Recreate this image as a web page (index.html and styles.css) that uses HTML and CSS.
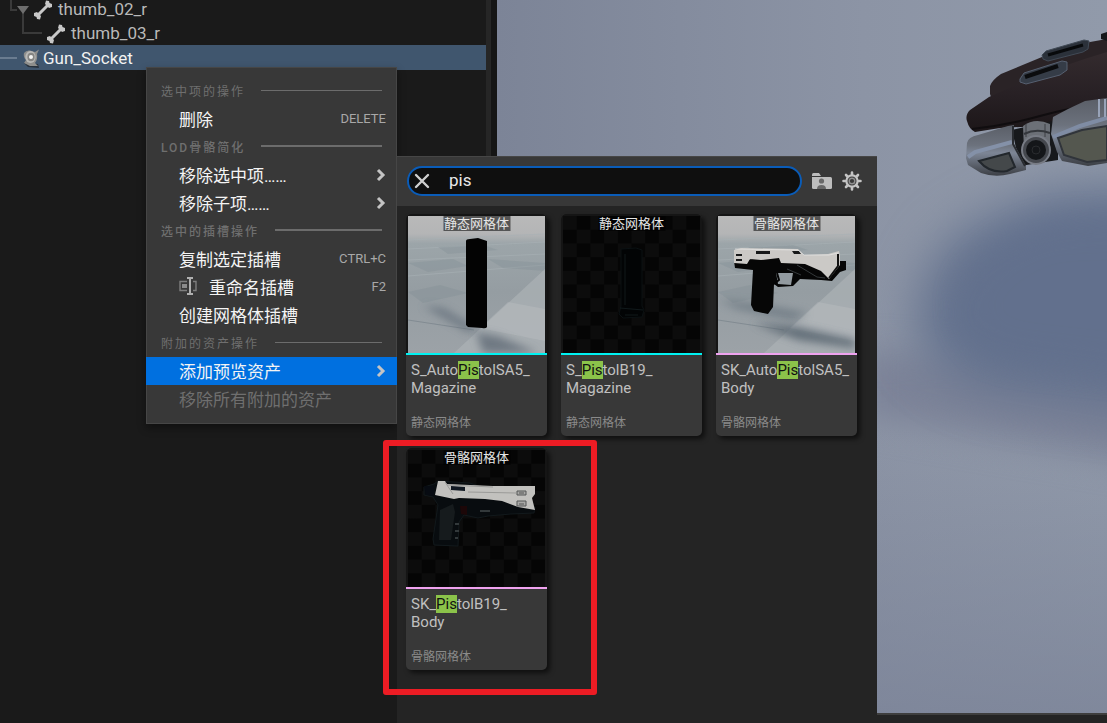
FILE: index.html
```html
<!DOCTYPE html>
<html lang="zh-CN">
<head>
<meta charset="utf-8">
<title>Skeleton Editor</title>
<link rel="stylesheet" href="styles.css">
</head>
<body>
<div class="editor">
  <aside class="tree">
    <div class="tree-row">
      <svg class="branch branch-a" viewBox="0 0 33 25" aria-hidden="true"><path d="M11 0V13H17M23 15V25" fill="none" stroke="#3a3a3a" stroke-width="2"/><path d="M17 9H29L23 17Z" fill="#6e6e6e"/></svg>
      <svg class="bone" viewBox="0 0 20 20" aria-hidden="true"><path d="M5 15L15 5" stroke="#c8c8c8" stroke-width="3"/><path d="M1 13L4 12L8 16L7 19.500L4 19L3.500 17L1 16Z M12 4L13 0.500L16 1L16.500 3L19 4L19 7L16 8Z" fill="#c8c8c8"/></svg>
      <span class="tree-label">thumb_02_r</span>
    </div>
    <div class="tree-row">
      <svg class="branch branch-b" viewBox="0 0 46 25" aria-hidden="true"><path d="M23 0V12H42" fill="none" stroke="#3a3a3a" stroke-width="2"/></svg>
      <svg class="bone" viewBox="0 0 20 20" aria-hidden="true"><path d="M5 15L15 5" stroke="#c8c8c8" stroke-width="3"/><path d="M1 13L4 12L8 16L7 19.500L4 19L3.500 17L1 16Z M12 4L13 0.500L16 1L16.500 3L19 4L19 7L16 8Z" fill="#c8c8c8"/></svg>
      <span class="tree-label">thumb_03_r</span>
    </div>
    <div class="tree-row is-selected">
      <svg class="branch branch-c" viewBox="0 0 22 25" aria-hidden="true"><path d="M0 12H17" stroke="#6a7c90" stroke-width="2"/></svg>
      <svg class="socket" viewBox="0 0 20 20" aria-hidden="true"><path d="M2 14L6 18L17 19L16 15Z" fill="#29323c"/><path d="M2 4Q4 1 8 1.500L13 3L17 0.500L15 5Q16 10 13 14L16 17L8 17L2 14L4 11Q1 8 2 4Z" fill="#8e8e8c"/><ellipse cx="8.500" cy="8" rx="5.200" ry="6" fill="#b9b9b7"/><ellipse cx="9" cy="8" rx="3.600" ry="4.200" fill="#858583"/><circle cx="9" cy="8" r="2" fill="#f4f4f2"/></svg>
      <span class="tree-label">Gun_Socket</span>
    </div>
  </aside>
  <div class="scroll-track"></div>
  <div class="splitter"></div>
  <main class="viewport">
    <svg class="scene" viewBox="497 0 610 713" preserveAspectRatio="xMidYMin slice" aria-hidden="true">
      <defs>
        <linearGradient id="sky" x1="0" x2="1"><stop offset="0" stop-color="#7c8497"/><stop offset=".6" stop-color="#8c94a5"/><stop offset="1" stop-color="#919aaa"/></linearGradient>
        <linearGradient id="low" x1="0" y1="0" x2="0" y2="1"><stop offset=".6" stop-color="#7a8297" stop-opacity="0"/><stop offset="1" stop-color="#7a8297" stop-opacity=".75"/></linearGradient>
        <linearGradient id="metal" x1="0" y1="0" x2="0" y2="1"><stop offset="0" stop-color="#5a5e67"/><stop offset=".4" stop-color="#6c727d"/><stop offset=".55" stop-color="#7d8696"/><stop offset="1" stop-color="#3c3f45"/></linearGradient>
        <linearGradient id="leather" x1="0" y1="0" x2="0" y2="1"><stop offset="0" stop-color="#342b2e"/><stop offset=".55" stop-color="#272024"/><stop offset="1" stop-color="#1c1618"/></linearGradient>
        <filter id="blur1" x="-50%" y="-50%" width="200%" height="200%" color-interpolation-filters="sRGB"><feGaussianBlur stdDeviation="24"/></filter>
        <filter id="blur2" x="-50%" y="-50%" width="200%" height="200%" color-interpolation-filters="sRGB"><feGaussianBlur stdDeviation="16"/></filter>
      </defs>
      <rect x="497" y="0" width="610" height="713" fill="url(#sky)"/>
      <path d="M860 415L1180 470V370L860 350Z" fill="#7c8398" filter="url(#blur2)"/>
      <path d="M1200 182L1060 190Q985 210 945 245Q905 300 920 345Q950 388 1020 396L1200 420Z" fill="#63718d" filter="url(#blur1)"/>
      <path d="M1200 220L1050 226Q985 245 965 290Q955 350 1020 358L1200 378Z" fill="#62708d" filter="url(#blur2)" opacity=".7"/>
      <rect x="497" y="0" width="610" height="713" fill="url(#low)"/>
      <path d="M990 94V86Q992 80 1001 74L1042 57L1090 42L1107 39V110L1000 122Z" fill="#2a2326"/>
      <path d="M1101 34L1107 32V41L1101 39Z" fill="#15171a"/>
      <path d="M967 121Q965 115 970 110L989 97L1020 83Q1060 66 1107 52V104L1064 120L1040 126L1000 128L975 132Q969 129 967 121Z" fill="url(#leather)"/>
      <path d="M972 129Q1008 125 1040 116T1107 104" fill="none" stroke="#100d0f" stroke-width="2"/>
      <path d="M1042 55L1046 51L1084 40L1089 41L1088 49L1083 52L1048 61L1043 59Z" fill="#2b313a" stroke="#414a56"/><path d="M1048 55L1083 45" stroke="#080a0c" stroke-width="3"/>
      <path d="M1020 79L1024 73L1062 61L1067 62L1067 70L1060 75L1026 84L1020 82Z" fill="#353c47" stroke="#566070"/><path d="M1025 77L1058 66" stroke="#0b0c0e" stroke-width="4"/>
      <path d="M1012 130L1025 127L1058 120V160L1020 166Z" fill="#17191c"/>
      <path d="M966 158L967 143Q968 137 978 135L1008 126L1014 125V144L1026 166V170L1010 174Q995 178 981 173L968 165Z" fill="url(#metal)"/>
      <path d="M968 157L975 152L1012 142" fill="none" stroke="#8491a8" stroke-width="4"/>
      <path d="M1013 126V144L1025 166" fill="none" stroke="#292c31" stroke-width="2"/>
      <path d="M979 161L1009 153L1015 167L1007 171Q990 174 979 161Z" fill="#44484a" stroke="#22272c" stroke-width="2"/>
      <path d="M1023 126Q1035 117 1050 124V150H1024Z" fill="#6c7077"/><path d="M1026 124V137M1045 124V137" stroke="#3c3f45"/><path d="M1024 134Q1036 128 1050 133" fill="none" stroke="#34373c" stroke-width="2"/>
      <circle cx="1036" cy="150" r="14" fill="#45484e" stroke="#787c85" stroke-width="2"/><circle cx="1036" cy="150" r="10" fill="#141619"/><circle cx="1036" cy="150" r="4" fill="none" stroke="#292b2e"/>
      <path d="M1051 134L1053 117L1068 109L1085 101L1107 98V163L1088 166L1062 161L1057 152Z" fill="url(#metal)"/>
      <path d="M1053 137L1080 126L1107 118" fill="none" stroke="#7f8ca4" stroke-width="4"/>
      <path d="M1058 138L1082 130L1107 126V160L1087 162L1064 155Z" fill="#54574f" stroke="#30343a" stroke-width="2"/>
      <path d="M1099 99V117M1105 99V117" stroke="#98a3b8" stroke-width="2"/>
    </svg>
  </main>
</div>

<nav class="menu" aria-label="Gun_Socket">
  <div class="menu-heading">选中项的操作</div>
  <button class="menu-item"><span>删除</span><kbd>DELETE</kbd></button>
  <div class="menu-heading is-strong">LOD骨骼简化</div>
  <button class="menu-item"><span>移除选中项……</span><svg class="chevron" viewBox="0 0 10 14"><path d="M2 2L7 7L2 12"/></svg></button>
  <button class="menu-item"><span>移除子项……</span><svg class="chevron" viewBox="0 0 10 14"><path d="M2 2L7 7L2 12"/></svg></button>
  <div class="menu-heading is-strong">选中的插槽操作</div>
  <button class="menu-item"><span>复制选定插槽</span><kbd>CTRL+C</kbd></button>
  <button class="menu-item"><svg class="rename" viewBox="0 0 18 18" aria-hidden="true"><path d="M8 4.500H1V13.500H8M14 4.500H17V13.500H14" fill="none" stroke="#7e7e7e" stroke-width="1.400"/><rect x="3" y="7" width="5" height="4" fill="#8a8a8a"/><path d="M8 1H14M11 1V17M8 17H14" fill="none" stroke="#b0b0b0" stroke-width="2"/></svg><span>重命名插槽</span><kbd>F2</kbd></button>
  <button class="menu-item"><span>创建网格体插槽</span></button>
  <div class="menu-heading">附加的资产操作</div>
  <button class="menu-item is-active"><span>添加预览资产</span><svg class="chevron" viewBox="0 0 10 14"><path d="M2 2L7 7L2 12"/></svg></button>
  <button class="menu-item" disabled><span>移除所有附加的资产</span></button>
</nav>

<section class="picker" aria-label="添加预览资产">
  <header class="picker-bar">
    <div class="search">
      <button class="icon-button" aria-label="清除"><svg class="clear" viewBox="0 0 16 16"><path d="M2 2L14 14M14 2L2 14" stroke="#cfcfcf" stroke-width="2.400" stroke-linecap="round"/></svg></button>
      <input class="search-input" type="text" value="pis" aria-label="搜索">
    </div>
    <button class="icon-button" aria-label="文件夹"><svg class="folder" viewBox="0 0 20 16"><path d="M0 1.500Q0 0 1.500 0H7L9 3H0Z" fill="#bdbdbd"/><path d="M0 4H18.500Q20 4 20 5.500V14.500Q20 16 18.500 16H1.500Q0 16 0 14.500Z" fill="#bdbdbd"/><circle cx="9.500" cy="8" r="2.600" fill="#686868"/><path d="M5 16Q5 12 9.500 12T14 16Z" fill="#686868"/></svg></button>
    <button class="icon-button" aria-label="设置"><svg class="gear" viewBox="0 0 20 20"><g stroke="#c4c4c4" fill="none"><path d="M10 1.500V18.500M1.500 10H18.500M4 4L16 16M16 4L4 16" stroke-width="2.600" stroke-linecap="round"/><circle cx="10" cy="10" r="5.600" fill="#383838" stroke-width="2.200"/><circle cx="10" cy="10" r="2.800" stroke="#8f8f8f" stroke-width="1.400"/></g></svg></button>
  </header>
  <div class="assets">
    <article class="asset">
      <div class="thumb">
        <svg viewBox="0 0 137 137" aria-hidden="true">
          <defs>
            <linearGradient id="floor" x1="0" y1="0" x2="0" y2="1"><stop offset="0" stop-color="#b9b9b9"/><stop offset=".13" stop-color="#b4b5b6"/><stop offset=".2" stop-color="#9ca5a9"/><stop offset=".55" stop-color="#959da2"/><stop offset="1" stop-color="#9ca2a7"/></linearGradient>
            <filter id="soft" x="-30%" y="-50%" width="160%" height="200%"><feGaussianBlur stdDeviation="4"/></filter>
            <g id="ground">
              <rect width="137" height="137" fill="url(#floor)"/>
              <path d="M0 24L137 18M0 33L137 26M0 44L137 38M0 60L137 49" stroke="#a8b1b5" opacity=".6"/>
              <path d="M0 47L45 43L60 50L20 56ZM80 43L137 47V55L95 52ZM30 31L75 29L90 34L40 38ZM0 76L32 69L60 77L15 87Z" fill="#7f8a91" opacity=".3"/>
              <path d="M137 53L46 137H137Z" fill="#aeb3b7" opacity=".65"/>
              <path d="M0 104L66 114" stroke="#828b92"/>
              <path d="M100 86L137 93V125L72 112Z" fill="#c0c4c7" opacity=".35"/>
            </g>
            <pattern id="checks" width="27.400" height="27.400" patternUnits="userSpaceOnUse"><rect width="27.400" height="27.400" fill="#050505"/><path d="M0 0H13.700V27.400H27.400V13.700H0Z" fill="#0c0c0c"/></pattern>
          </defs>
          <use href="#ground"/>
          <path d="M15 90L35 92L70 113L60 116Z" fill="#606c78" filter="url(#soft)" opacity=".75"/>
          <path d="M68 116L90 120L130 137H75Z" fill="#59646f" filter="url(#soft)" opacity=".7"/>
          <path d="M58 25Q58 23 62 23L70 22L79 25V111Q78 113 74 112L60 111L58 109Z" fill="#030303"/>
        </svg>
        <span class="thumb-label">静态网格体</span>
      </div>
      <div class="asset-info is-static"><h3 class="asset-name">S_Auto<mark>Pis</mark>tolSA5_<br>Magazine</h3><p class="asset-type">静态网格体</p></div>
    </article>
    <article class="asset">
      <div class="thumb">
        <svg viewBox="0 0 137 137" aria-hidden="true"><rect width="137" height="137" fill="url(#checks)"/><path d="M58 33L73 32L79 34V90L81 94L79 101L60 102L56 98L58 90Z" fill="#020405" stroke="#0b1113"/><path d="M57 92L80 94M62 38V89M62 99H75" stroke="#10191b" fill="none"/></svg>
        <span class="thumb-label">静态网格体</span>
      </div>
      <div class="asset-info is-static"><h3 class="asset-name">S_<mark>Pis</mark>tolB19_<br>Magazine</h3><p class="asset-type">静态网格体</p></div>
    </article>
    <article class="asset">
      <div class="thumb">
        <svg viewBox="0 0 137 137" aria-hidden="true">
          <use href="#ground"/>
          <path d="M0 84L40 88L90 97L75 104L20 93Z" fill="#616d78" filter="url(#soft)" opacity=".65"/>
          <path d="M35 107L80 111L137 124V132L80 124Z" fill="#57636e" filter="url(#soft)" opacity=".85"/>
          <path d="M16 45L62 40L88 48L122 49L122 45L128 45V54L122 56L114 65L103 64L82 63L75 70L60 71L56 68L55 91L50 98L36 95L33 89L35 54L17 52Z" fill="#060606"/>
          <path d="M58 57L75 57L73 69L60 68Z" fill="#929a9f"/><path d="M59 57L61 64L56 68" fill="none" stroke="#050505" stroke-width="2"/>
          <path d="M16 34L23 32L80 33L86 39L110 38L121 35L122 40V49L111 63L103 55L87 48L63 47L61 42L43 44L32 43L29 48L16 47Z" fill="#cbc9c6"/>
          <path d="M38 35H52V38L38 38ZM18 38H24V40H18ZM18 43H24V45H18ZM74 35H81L83 38H76Z" fill="#171819"/>
          <path d="M17 33L80 34L86 39L111 39L120 37" fill="none" stroke="#eee" opacity=".6"/><path d="M79 49L99 61L107 62M69 53L83 59" fill="none" stroke="#34383a"/><path d="M120 38V50L111 62" fill="none" stroke="#111" stroke-width="2"/>
        </svg>
        <span class="thumb-label">骨骼网格体</span>
      </div>
      <div class="asset-info is-skeletal"><h3 class="asset-name">SK_Auto<mark>Pis</mark>tolSA5_<br>Body</h3><p class="asset-type">骨骼网格体</p></div>
    </article>
    <article class="asset">
      <div class="thumb">
        <svg viewBox="0 0 137 137" aria-hidden="true">
          <rect width="137" height="137" fill="url(#checks)"/>
          <path d="M16 37L26 34L30 31L62 33L127 57L126 63L103 64L80 66L70 68L56 65L51 72L50 96L26 95L25 89L30 55L25 47L16 45Z" fill="#080c0f" stroke="#12191c"/>
          <path d="M52 56H59V65L53 64Z" fill="#1c0708"/>
          <path d="M32 60L45 54L47 62L43 90L31 90Z" fill="#161b1d"/>
          <path d="M30 31L37 31L39 34L85 36L127 36L127 44L124 48L127 60L110 57L94 51L77 49L51 48L46 49L27 45Z" fill="#c2c1be"/>
          <path d="M39 35L85 37M37 32L45 44M60 42L108 43" fill="none" stroke="#9a9a98" stroke-width="1"/>
          <path d="M43 36L57 37V41L43 40Z" fill="#111923"/>
          <path d="M109 41H118V45H109ZM109 51H118V56H109Z" fill="#a8a8a6" stroke="#555757"/><path d="M111 43H116M111 54H116" stroke="#555"/>
          <path d="M16 36H26V46L18 45Z" fill="#070b12"/><path d="M47 74H51M47 81H51M47 88H50M72 61H82" stroke="#33393b" stroke-width="2"/>
        </svg>
        <span class="thumb-label">骨骼网格体</span>
      </div>
      <div class="asset-info is-skeletal"><h3 class="asset-name">SK_<mark>Pis</mark>tolB19_<br>Body</h3><p class="asset-type">骨骼网格体</p></div>
    </article>
  </div>
</section>
<div class="callout" aria-hidden="true"></div>
</body>
</html>
```

FILE: styles.css
```css
* { box-sizing: border-box; }
body {
  margin: 0;
  overflow: hidden;
  background: #1a1a1a;
  color: #c0c0c0;
  font-family: Roboto, "Noto Sans CJK SC", sans-serif;
}
button { font: inherit; color: inherit; background: none; border: 0; padding: 0; }
svg { display: block; flex: none; }

.editor { display: flex; height: 100vh; }
.tree { flex: 0 0 486px; }
.tree-row { display: flex; align-items: center; height: 25px; padding-top: 2px; font-size: 17px; line-height: 15px; color: #b9b9b9; }
.tree-row:first-child { height: 20px; padding-bottom: 3px; }
.tree-row.is-selected { background: #40566e; color: #f2f2f2; }
.branch { height: 25px; }
.branch-a { width: 33px; }
.branch-b { width: 46px; }
.branch-c { width: 22px; }
.bone { width: 20px; height: 20px; margin-right: 5px; }
.socket { width: 20px; height: 20px; margin-right: 1px; }
.scroll-track { width: 5px; background: #262626; }
.splitter { width: 6px; background: #151515; }
.viewport { flex: 1; min-width: 0; display: flex; flex-direction: column; border-bottom: 8px solid #242424; }
.scene { flex: 1; width: 100%; min-height: 0; border-bottom: 2px solid #3e3e3e; }

.menu {
  position: absolute;
  left: 146px;
  top: 67px;
  width: 251px;
  padding: 9px 0 10px;
  background: #383838;
  border: 1px solid #464646;
  border-width: 1px 0;
  box-shadow: 0 4px 8px #0006, inset 1px 0 #464646, inset -1px 0 #464646;
}
.menu-heading {
  display: flex;
  align-items: center;
  gap: 16px;
  height: 28px;
  padding: 0 15px 2px;
  font-size: 12px;
  letter-spacing: 2px;
  color: #6f6f6f;
}
.menu-heading.is-strong { font-weight: 500; }
.menu-heading::after { content: ""; flex: 1; height: 1px; background: #6c6c6c; }
.menu-heading.is-strong::after { height: 2px; }
.menu-item {
  display: flex;
  align-items: center;
  width: 100%;
  height: 28px;
  padding: 0 11px 2px 33px;
  font-size: 17px;
  color: #f4f4f4;
}
.menu-item.is-active { background: #0070e0; }
.menu-item:disabled { color: #6f6f6f; }
.menu-item kbd { margin-left: auto; font: 13px Roboto, sans-serif; color: #a8a8a8; }
.chevron { width: 10px; height: 14px; margin: 2px 0 0 auto; fill: none; stroke: #c4c4c4; stroke-width: 3; }
.rename { width: 18px; height: 18px; margin-right: 12px; }

.picker {
  position: absolute;
  left: 397px;
  top: 156px;
  bottom: 0;
  width: 480px;
  background: #242424;
  border-top: 1px solid #464646;
}
.picker-bar { display: flex; align-items: center; gap: 10px; height: 49px; padding: 0 15px 2px 10px; background: #383838; }
.search {
  display: flex;
  align-items: center;
  flex: 1;
  height: 30px;
  padding: 0 5px;
  background: #0f0f0f;
  border: 2px solid #0a5cb8;
  border-radius: 15px;
}
.clear { width: 16px; height: 16px; }
.search-input { flex: 1; min-width: 0; padding: 0 0 2px 19px; border: 0; outline: 0; background: none; color: #e8e8e8; font: 17px Roboto, sans-serif; }
.folder { width: 20px; height: 16px; }
.gear { width: 20px; height: 20px; }

.assets { display: grid; grid-template-columns: repeat(3, 141px); gap: 12px 14px; padding: 8px 9px; }
.asset { height: 222px; display: flex; flex-direction: column; background: #383838; border-radius: 5px; overflow: hidden; box-shadow: 3px 3px 5px #0009; }
.thumb { position: relative; padding: 2px 2px 0; background: #151515; }
.thumb svg { width: 100%; height: 137px; }
.thumb-label { position: absolute; top: 2px; left: 50%; transform: translateX(-50%); padding: 0 1px; background: #0008; color: #e6e6e6; font-size: 13px; line-height: 15px; white-space: nowrap; }
.asset-info { flex: 1; display: flex; flex-direction: column; justify-content: space-between; padding: 6px 5px 4px; border-top: 2px solid; }
.is-static { border-color: #00f2f2; }
.is-skeletal { border-color: #efa2ef; }
.asset-name { margin: 0; font-size: 15px; line-height: 18px; font-weight: 400; color: #c0c0c0; }
.asset-name mark { background: #8bc34a; color: #111; }
.asset-type { margin: 0; font-size: 12px; line-height: 18px; color: #8a8a8a; }

.callout { position: absolute; left: 383px; top: 440px; width: 214px; height: 255px; border: 6px solid #ed1c24; border-radius: 3px; }
```
